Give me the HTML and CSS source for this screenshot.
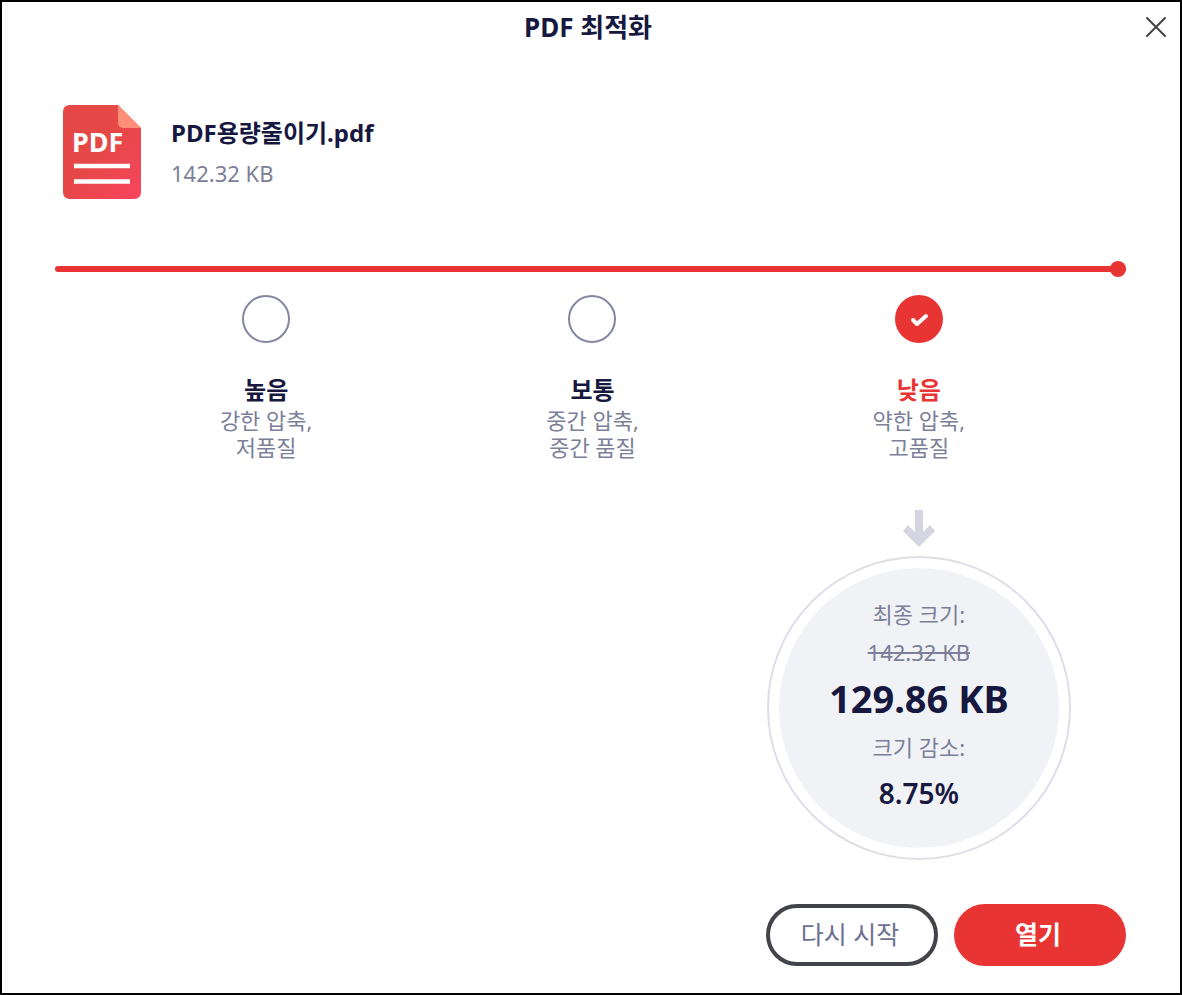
FILE: index.html
```html
<!DOCTYPE html>
<html lang="ko">
<head>
    <meta charset="UTF-8">
    <meta name="viewport" content="width=device-width, initial-scale=1.0">
    <title>PDF 최적화</title>
    <link rel="stylesheet" href="styles.css">
</head>
<body>

<main class="dialog">
    <header class="dialog-header">
        <h1>PDF 최적화</h1>
        <button class="close" type="button" aria-label="닫기">
            <svg width="22" height="22" viewBox="0 0 22 22" fill="none" stroke="#444" stroke-width="2" stroke-linecap="round">
                <path d="M2 2l18 18M20 2L2 20"/>
            </svg>
        </button>
    </header>

    <section class="file">
        <svg class="file-icon" width="80" height="94" viewBox="0 0 80 94">
            <defs>
                <linearGradient id="sheet" x1="0.2" y1="0.1" x2="1" y2="1">
                    <stop offset="0.4" stop-color="#e64848"/>
                    <stop offset="1" stop-color="#f8445f"/>
                </linearGradient>
            </defs>
            <path d="M8 0h48l23 23v64q0 7-7 7H8q-7 0-7-7V7q0-7 7-7z" fill="url(#sheet)"/>
            <path d="M56 0l23 23H62q-6 0-6-6z" fill="#ff8f78"/>
            <text class="file-icon-text" x="10" y="47">PDF</text>
            <path d="M12 61h56M12 76.500h56" stroke="#fff" stroke-width="4.500"/>
        </svg>
        <div class="file-info">
            <h2>PDF용량줄이기.pdf</h2>
            <p>142.32 KB</p>
        </div>
    </section>

    <input class="progress" type="range" min="0" max="100" value="100" aria-label="진행률">

    <section class="levels">
        <label class="level">
            <input type="radio" name="level" value="high">
            <span class="level-name">높음</span>
            <span class="level-text">강한 압축,<br>저품질</span>
        </label>
        <label class="level">
            <input type="radio" name="level" value="medium">
            <span class="level-name">보통</span>
            <span class="level-text">중간 압축,<br>중간 품질</span>
        </label>
        <label class="level">
            <input type="radio" name="level" value="low" checked>
            <span class="level-name">낮음</span>
            <span class="level-text">약한 압축,<br>고품질</span>
        </label>

        <div class="result">
            <svg class="arrow" width="34" height="38" viewBox="0 0 34 38">
                <path d="M13 0h8v22l7-7 5 6-16 16L1 21l5-6 7 7z" fill="#d5d5e2"/>
            </svg>
            <div class="ring">
                <div class="disc">
                    <p class="caption">최종 크기:</p>
                    <del>142.32 KB</del>
                    <strong class="size">129.86 KB</strong>
                    <p class="caption">크기 감소:</p>
                    <strong class="percent">8.75%</strong>
                </div>
            </div>
        </div>
    </section>

    <footer class="actions">
        <button class="btn btn-outline" type="button">다시 시작</button>
        <button class="btn btn-primary" type="button">열기</button>
    </footer>
</main>

</body>
</html>
```

FILE: styles.css
```css
* {
    box-sizing: border-box;
}

body {
    margin: 0;
    font-family: "Noto Sans", "Noto Sans CJK KR", sans-serif;
    color: #161840;
    background-color: #fff;
}

h1, h2, p {
    margin: 0;
}

.dialog {
    display: flex;
    flex-direction: column;
    min-height: 100vh;
    border: 2px solid #000;
}

.dialog-header {
    display: grid;
    grid-template-columns: 42px 1fr 48px;
    align-items: center;
    height: 50px;
}

.dialog-header h1 {
    grid-column: 2;
    font-size: 26px;
    font-weight: 700;
    line-height: 36px;
    text-align: center;
}

.close {
    display: flex;
    justify-content: center;
    padding: 8px 0;
    border: none;
    background: none;
    cursor: pointer;
}

/* File */
.file {
    display: flex;
    gap: 29px;
    padding: 53px 60px 0;
}

.file-icon {
    flex: none;
}

.file-icon-text {
    font-size: 27px;
    font-weight: 700;
    fill: #fff;
}

.file-info {
    padding-top: 8px;
}

.file-info h2 {
    font-size: 24px;
    font-weight: 700;
    line-height: 40px;
}

.file-info p {
    font-size: 22px;
    line-height: 40px;
    color: #7b7f98;
}

/* Progress line with a knob at its end */
.progress {
    appearance: none;
    height: 16px;
    margin: 62px 54px 0 53px;
    background: none;
}

.progress::-webkit-slider-runnable-track {
    height: 6px;
    border-radius: 3px;
    background-color: #e93434;
}

.progress::-webkit-slider-thumb {
    appearance: none;
    width: 16px;
    height: 16px;
    margin-top: -5px;
    border-radius: 50%;
    background-color: #e93434;
}

/* Compression levels */
.levels {
    display: grid;
    grid-template-columns: repeat(3, 1fr);
    padding: 18px 98px 0 101px;
}

.level {
    display: flex;
    flex-direction: column;
    align-items: center;
    text-align: center;
    cursor: pointer;
}

.level input {
    appearance: none;
    width: 48px;
    height: 48px;
    margin: 0;
    border: 2px solid #8487a2;
    border-radius: 50%;
}

.level input:checked {
    border: none;
    background: #e93434 url("data:image/svg+xml,%3Csvg xmlns='http://www.w3.org/2000/svg' viewBox='0 0 48 48' fill='none' stroke='white' stroke-width='4' stroke-linecap='round' stroke-linejoin='round'%3E%3Cpath d='M18 25l4 4 9-8'/%3E%3C/svg%3E") center / contain no-repeat;
}

.level-name {
    margin-top: 30px;
    font-size: 24px;
    font-weight: 600;
    line-height: 34px;
}

.level input:checked + .level-name {
    color: #e93434;
}

.level-text,
.caption {
    font-size: 22px;
    line-height: 27px;
    color: #7b7f98;
}

/* Result */
.result {
    grid-column: 3;
    display: flex;
    flex-direction: column;
    align-items: center;
    padding-top: 49px;
}

.ring {
    margin-top: 8px;
    padding: 10px;
    border: 2px solid #dedee9;
    border-radius: 50%;
}

.disc {
    display: flex;
    flex-direction: column;
    align-items: center;
    width: 280px;
    height: 280px;
    padding-top: 33px;
    border-radius: 50%;
    background-color: #f1f2f6;
}

.disc del {
    margin-top: 6px;
    font-size: 22px;
    line-height: 36px;
    color: #7b7f98;
}

.size {
    font-size: 38px;
    line-height: 56px;
}

.disc .size + .caption {
    margin-top: 8px;
}

.percent {
    margin-top: 12px;
    font-size: 28px;
    font-weight: 600;
    line-height: 40px;
}

/* Buttons */
.actions {
    display: flex;
    justify-content: flex-end;
    gap: 16px;
    margin-top: auto;
    padding: 16px 54px 27px;
}

.btn {
    min-width: 172px;
    height: 62px;
    padding: 0 16px 4px 12px;
    border-radius: 31px;
    font-family: inherit;
    font-size: 25px;
    cursor: pointer;
}

.btn-outline {
    border: 4px solid #434449;
    background-color: #fff;
    color: #6d7090;
}

.btn-primary {
    border: none;
    background-color: #e93434;
    color: #fff;
    font-weight: 600;
}
```
